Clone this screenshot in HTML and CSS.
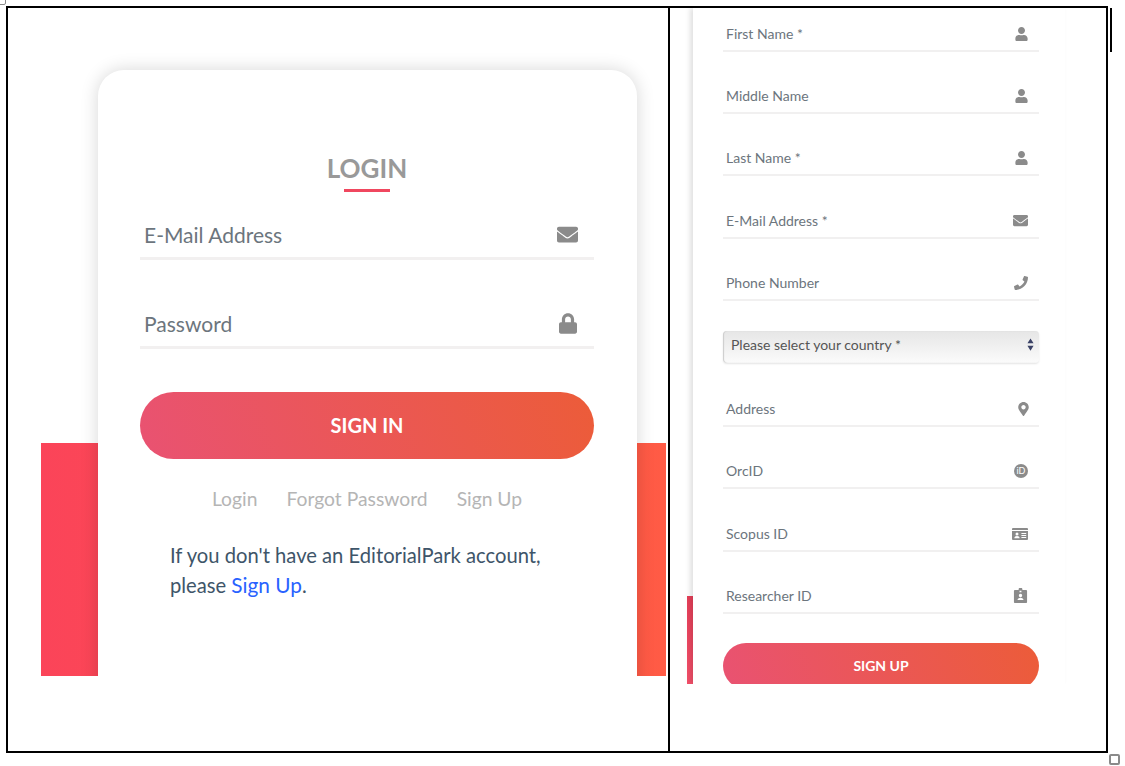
FILE: index.html
```html
<!DOCTYPE html>
<html lang="en">
<head>
    <meta charset="UTF-8">
    <meta name="viewport" content="width=device-width, initial-scale=1.0">
    <title>EditorialPark - Login and Sign Up</title>
    <link rel="stylesheet" href="styles.css">
</head>
<body>

<svg class="defs" aria-hidden="true">
    <symbol id="i-user" viewBox="0 0 448 512"><path d="M224 256c70.7 0 128-57.3 128-128S294.7 0 224 0 96 57.3 96 128s57.3 128 128 128zm89.6 32h-16.7c-22.2 10.2-46.9 16-72.9 16s-50.6-5.8-72.9-16h-16.7C60.2 288 0 348.2 0 422.4V464c0 26.5 21.5 48 48 48h352c26.5 0 48-21.5 48-48v-41.6c0-74.2-60.2-134.4-134.4-134.4z"/></symbol>
    <symbol id="i-mail" viewBox="0 0 512 512"><path d="M502.3 190.8c3.9-3.1 9.7-.2 9.7 4.7V400c0 26.5-21.5 48-48 48H48c-26.5 0-48-21.5-48-48V195.6c0-5 5.7-7.8 9.7-4.7 22.4 17.4 52.1 39.5 154.1 113.6 21.1 15.4 56.7 47.8 92.2 47.6 35.7.3 72-32.8 92.3-47.6 102-74.1 131.6-96.3 154-113.7zM256 320c23.2.4 56.6-29.2 73.4-41.4 132.7-96.3 142.8-104.7 173.4-128.7 5.8-4.5 9.2-11.5 9.2-18.9v-19c0-26.5-21.5-48-48-48H48C21.5 64 0 85.5 0 112v19c0 7.4 3.4 14.3 9.2 18.9 30.6 23.9 40.7 32.4 173.4 128.7 16.8 12.2 50.2 41.8 73.4 41.4z"/></symbol>
    <symbol id="i-lock" viewBox="0 0 448 512"><path d="M400 224h-24v-72C376 68.2 307.8 0 224 0S72 68.2 72 152v72H48c-26.5 0-48 21.5-48 48v192c0 26.5 21.5 48 48 48h352c26.5 0 48-21.5 48-48V272c0-26.5-21.5-48-48-48zm-104 0H152v-72c0-39.7 32.3-72 72-72s72 32.3 72 72v72z"/></symbol>
    <symbol id="i-phone" viewBox="0 0 512 512"><path d="M493.4 24.6l-104-24c-11.3-2.6-22.9 3.3-27.5 13.9l-48 112c-4.2 9.8-1.4 21.3 6.9 28l60.6 49.6c-36 76.7-98.9 140.5-177.2 177.2l-49.6-60.6c-6.8-8.3-18.2-11.1-28-6.9l-112 48C3.9 366.5-2 378.1.6 389.4l24 104C27.1 504.2 36.7 512 48 512c256.1 0 464-207.5 464-464 0-11.2-7.7-20.9-18.6-23.4z"/></symbol>
    <symbol id="i-marker" viewBox="0 0 384 512"><path d="M172.268 501.67C26.97 291.031 0 260.1 0 192 0 85.961 85.961 0 192 0s192 85.961 192 192c0 60.031-26.97 99.031-172.268 309.67-9.535 13.774-29.93 13.773-39.464 0zM192 272c44.183 0 80-35.817 80-80s-35.817-80-80-80-80 35.817-80 80 35.817 80 80 80z"/></symbol>
    <symbol id="i-card" viewBox="0 0 16 12"><path fill-rule="evenodd" d="M1 0h14a1 1 0 0 1 1 1v10a1 1 0 0 1-1 1H1a1 1 0 0 1-1-1V1a1 1 0 0 1 1-1zM0 2v1h16V2zM5 4.6a1.5 1.5 0 1 0 0 3 1.5 1.5 0 0 0 0-3zM2.4 10.2h5.2c0-1.3-1-2.1-2.6-2.1s-2.6.8-2.6 2.1zM9.4 5v1h4.8V5zM9.4 7v1h4.8V7zM9.4 9v1h4.8V9z"/></symbol>
    <symbol id="i-badge" viewBox="0 0 14 16"><path fill-rule="evenodd" d="M1.2 2H5V1.2C5 .5 5.5 0 6.2 0h1.6C8.500 0 9 .5 9 1.200V2h3.800c.7 0 1.200.5 1.200 1.200v11.600c0 .7-.5 1.200-1.200 1.200H1.200C.5 16 0 15.500 0 14.800V3.200C0 2.500.5 2 1.200 2zM6 3v1.400h2V3zM7 6.200a1.800 1.800 0 1 0 0 3.600 1.800 1.800 0 0 0 0-3.600zM3.800 12.800h6.400c0-1.500-1.300-2.500-3.200-2.500s-3.200 1-3.200 2.500z"/></symbol>
</svg>

<div class="frame">
    <section class="pane pane-login">
        <div class="stage login-stage">
            <div class="red-block"></div>
            <div class="login-card">
                <h2 class="login-title">LOGIN</h2>

                <div class="login-field">
                    <span>E-Mail Address</span>
                    <svg class="icon icon-mail"><use href="#i-mail"/></svg>
                </div>
                <div class="login-field">
                    <span>Password</span>
                    <svg class="icon icon-lock"><use href="#i-lock"/></svg>
                </div>

                <button class="pill-btn signin-btn">SIGN IN</button>

                <div class="login-links">
                    <a>Login</a>
                    <a>Forgot Password</a>
                    <a>Sign Up</a>
                </div>

                <p class="login-note">If you don't have an EditorialPark account,<br>please <a>Sign Up</a>.</p>
            </div>
        </div>
    </section>

    <section class="pane pane-signup">
        <div class="stage signup-stage">
            <div class="red-strip"></div>
            <div class="signup-card">
                <div class="field"><span>First Name *</span><svg class="icon icon-user"><use href="#i-user"/></svg></div>
                <div class="field"><span>Middle Name</span><svg class="icon icon-user"><use href="#i-user"/></svg></div>
                <div class="field"><span>Last Name *</span><svg class="icon icon-user"><use href="#i-user"/></svg></div>
                <div class="field"><span>E-Mail Address *</span><svg class="icon icon-small-mail"><use href="#i-mail"/></svg></div>
                <div class="field"><span>Phone Number</span><svg class="icon icon-phone"><use href="#i-phone"/></svg></div>

                <div class="country-select">
                    <span>Please select your country *</span>
                    <svg class="select-arrows" viewBox="0 0 8 14"><path d="M4 0l3.500 5.500h-7zM4 14L.5 8.500h7z"/></svg>
                </div>

                <div class="field"><span>Address</span><svg class="icon icon-marker"><use href="#i-marker"/></svg></div>
                <div class="field">
                    <span>OrcID</span>
                    <svg class="icon icon-orcid" viewBox="0 0 14 14">
                        <circle cx="7" cy="7" r="7"/>
                        <text x="7" y="10.200" class="orcid-text">iD</text>
                    </svg>
                </div>
                <div class="field"><span>Scopus ID</span><svg class="icon icon-card"><use href="#i-card"/></svg></div>
                <div class="field"><span>Researcher ID</span><svg class="icon icon-badge"><use href="#i-badge"/></svg></div>

                <button class="pill-btn signup-btn">SIGN UP</button>
            </div>
        </div>
    </section>
</div>

<div class="handle handle-top"></div>
<div class="handle handle-bottom"></div>
<div class="side-bar"></div>

</body>
</html>
```

FILE: styles.css
```css
* {
    box-sizing: border-box;
}

body {
    margin: 0;
    height: 766px;
    overflow: hidden;
    background-color: #fff;
    font-family: Lato, "Noto Sans", sans-serif;
}

.defs {
    display: none;
}

.frame {
    display: flex;
    width: 1102px;
    height: 747px;
    margin: 6px 0 0 6px;
    border: 2px solid #000;
}

.pane-login {
    width: 662px;
    border-right: 2px solid #000;
}

.pane-signup {
    flex: 1;
}

.stage {
    position: relative;
    overflow: hidden;
}

.icon {
    flex: none;
    fill: #8b8b8b;
}

/* login side */
.login-stage {
    height: 668px;
}

.red-block {
    position: absolute;
    left: 33px;
    right: 2px;
    bottom: 0;
    height: 233px;
    background: linear-gradient(90deg, #fb4459, #ff5b45);
}

.login-card {
    position: relative;
    width: 539px;
    height: 660px;
    margin: 62px 0 0 90px;
    padding: 83px 43px 0 42px;
    background-color: #fff;
    border-radius: 26px 26px 0 0;
    box-shadow: 0 0 18px rgba(0, 0, 0, 0.16);
}

.login-title {
    position: relative;
    margin: 0;
    height: 39px;
    color: #999;
    font-size: 26px;
    font-weight: 700;
    line-height: 30px;
    text-align: center;
}

.login-title::after {
    content: "";
    position: absolute;
    left: 50%;
    bottom: 0;
    width: 46px;
    height: 3px;
    margin-left: -23px;
    background-color: #f0475f;
}

.login-field {
    display: flex;
    align-items: center;
    justify-content: space-between;
    height: 47px;
    margin-top: 42px;
    padding: 0 16px 2px 4px;
    border-bottom: 3px solid #f2f0f0;
    color: #6c757d;
    font-size: 21px;
}

.login-title + .login-field {
    margin-top: 21px;
}

.icon-mail {
    width: 21px;
    height: 21px;
}

.icon-lock {
    width: 18px;
    height: 21px;
    margin-right: 1px;
}

.pill-btn {
    display: block;
    width: 100%;
    border: 0;
    color: #fff;
    font-family: inherit;
    font-weight: 700;
    background: linear-gradient(70deg, #e95272, #ec5c39);
}

.signin-btn {
    height: 67px;
    margin-top: 43px;
    padding-bottom: 3px;
    border-radius: 34px;
    font-size: 20px;
}

.login-links {
    display: flex;
    justify-content: center;
    gap: 29px;
    margin-top: 28px;
    color: #b5b5b5;
    font-size: 19.300px;
    line-height: 24px;
}

.login-note {
    margin: 29px 0 0 30px;
    color: #3e5569;
    font-size: 20.200px;
    line-height: 30px;
}

.login-note a {
    color: #2962ff;
    font-size: 20.800px;
}

/* sign up side */
.signup-stage {
    height: 676px;
}

.red-strip {
    position: absolute;
    left: 17px;
    bottom: 0;
    width: 8px;
    height: 88px;
    background: linear-gradient(#e63f58, #f4506a);
}

.signup-card {
    position: relative;
    display: flex;
    flex-direction: column;
    gap: 18.200px;
    width: 372px;
    height: 676px;
    margin-left: 23px;
    padding: 0 26px 0 30px;
    background-color: #fff;
    box-shadow: -3px 0 5px rgba(0, 0, 0, 0.12);
}

.field {
    display: flex;
    align-items: flex-end;
    justify-content: space-between;
    flex: none;
    height: 44px;
    padding: 0 10px 6px 3px;
    border-bottom: 2px solid #f1f0f0;
    color: #6c757d;
    font-size: 14px;
    line-height: 20px;
}

.field .icon {
    align-self: center;
    margin-top: 16px;
}

.field .icon-user {
    width: 13px;
    height: 14px;
    margin-right: 1px;
}

.field .icon-small-mail {
    width: 15px;
    height: 15px;
    margin-right: 1px;
}

.field .icon-phone {
    width: 14px;
    height: 14px;
    margin-right: 1px;
}

.field .icon-marker {
    width: 11px;
    height: 14px;
    margin-right: 0;
}

.field .icon-orcid {
    width: 14px;
    height: 14px;
    margin-right: 1px;
}

.orcid-text {
    fill: #fff;
    font-size: 9px;
    text-anchor: middle;
}

.field .icon-card {
    width: 16px;
    height: 12px;
    margin-right: 1px;
}

.field .icon-badge {
    width: 15px;
    height: 15px;
    margin-right: 1px;
}

.country-select {
    display: flex;
    align-items: center;
    justify-content: space-between;
    flex: none;
    height: 32px;
    margin: 12px 0 2px;
    padding: 0 5px 4px 8px;
    border-radius: 4px;
    color: #555;
    font-size: 14px;
    background: linear-gradient(#e6e6e6, #fbfbfb);
    box-shadow: inset 1px 0 1px #ccc, 0 1px 2px #e4e4e4;
}

.select-arrows {
    width: 7px;
    height: 13px;
    fill: #3b4266;
}

.signup-btn {
    flex: none;
    height: 46px;
    margin-top: 11px;
    border-radius: 23px;
    font-size: 14px;
}

/* window handles around the pasted picture */
.handle {
    position: absolute;
    border: 2px solid #8a8a8a;
    border-radius: 2px;
    background-color: #fff;
}

.handle-top {
    left: -4px;
    top: -5px;
    width: 10px;
    height: 10px;
    border-width: 1px;
}

.handle-bottom {
    left: 1109px;
    top: 754px;
    width: 11px;
    height: 11px;
}

.side-bar {
    position: absolute;
    left: 1110px;
    top: 8px;
    width: 2px;
    height: 44px;
    background-color: #000;
}
```
